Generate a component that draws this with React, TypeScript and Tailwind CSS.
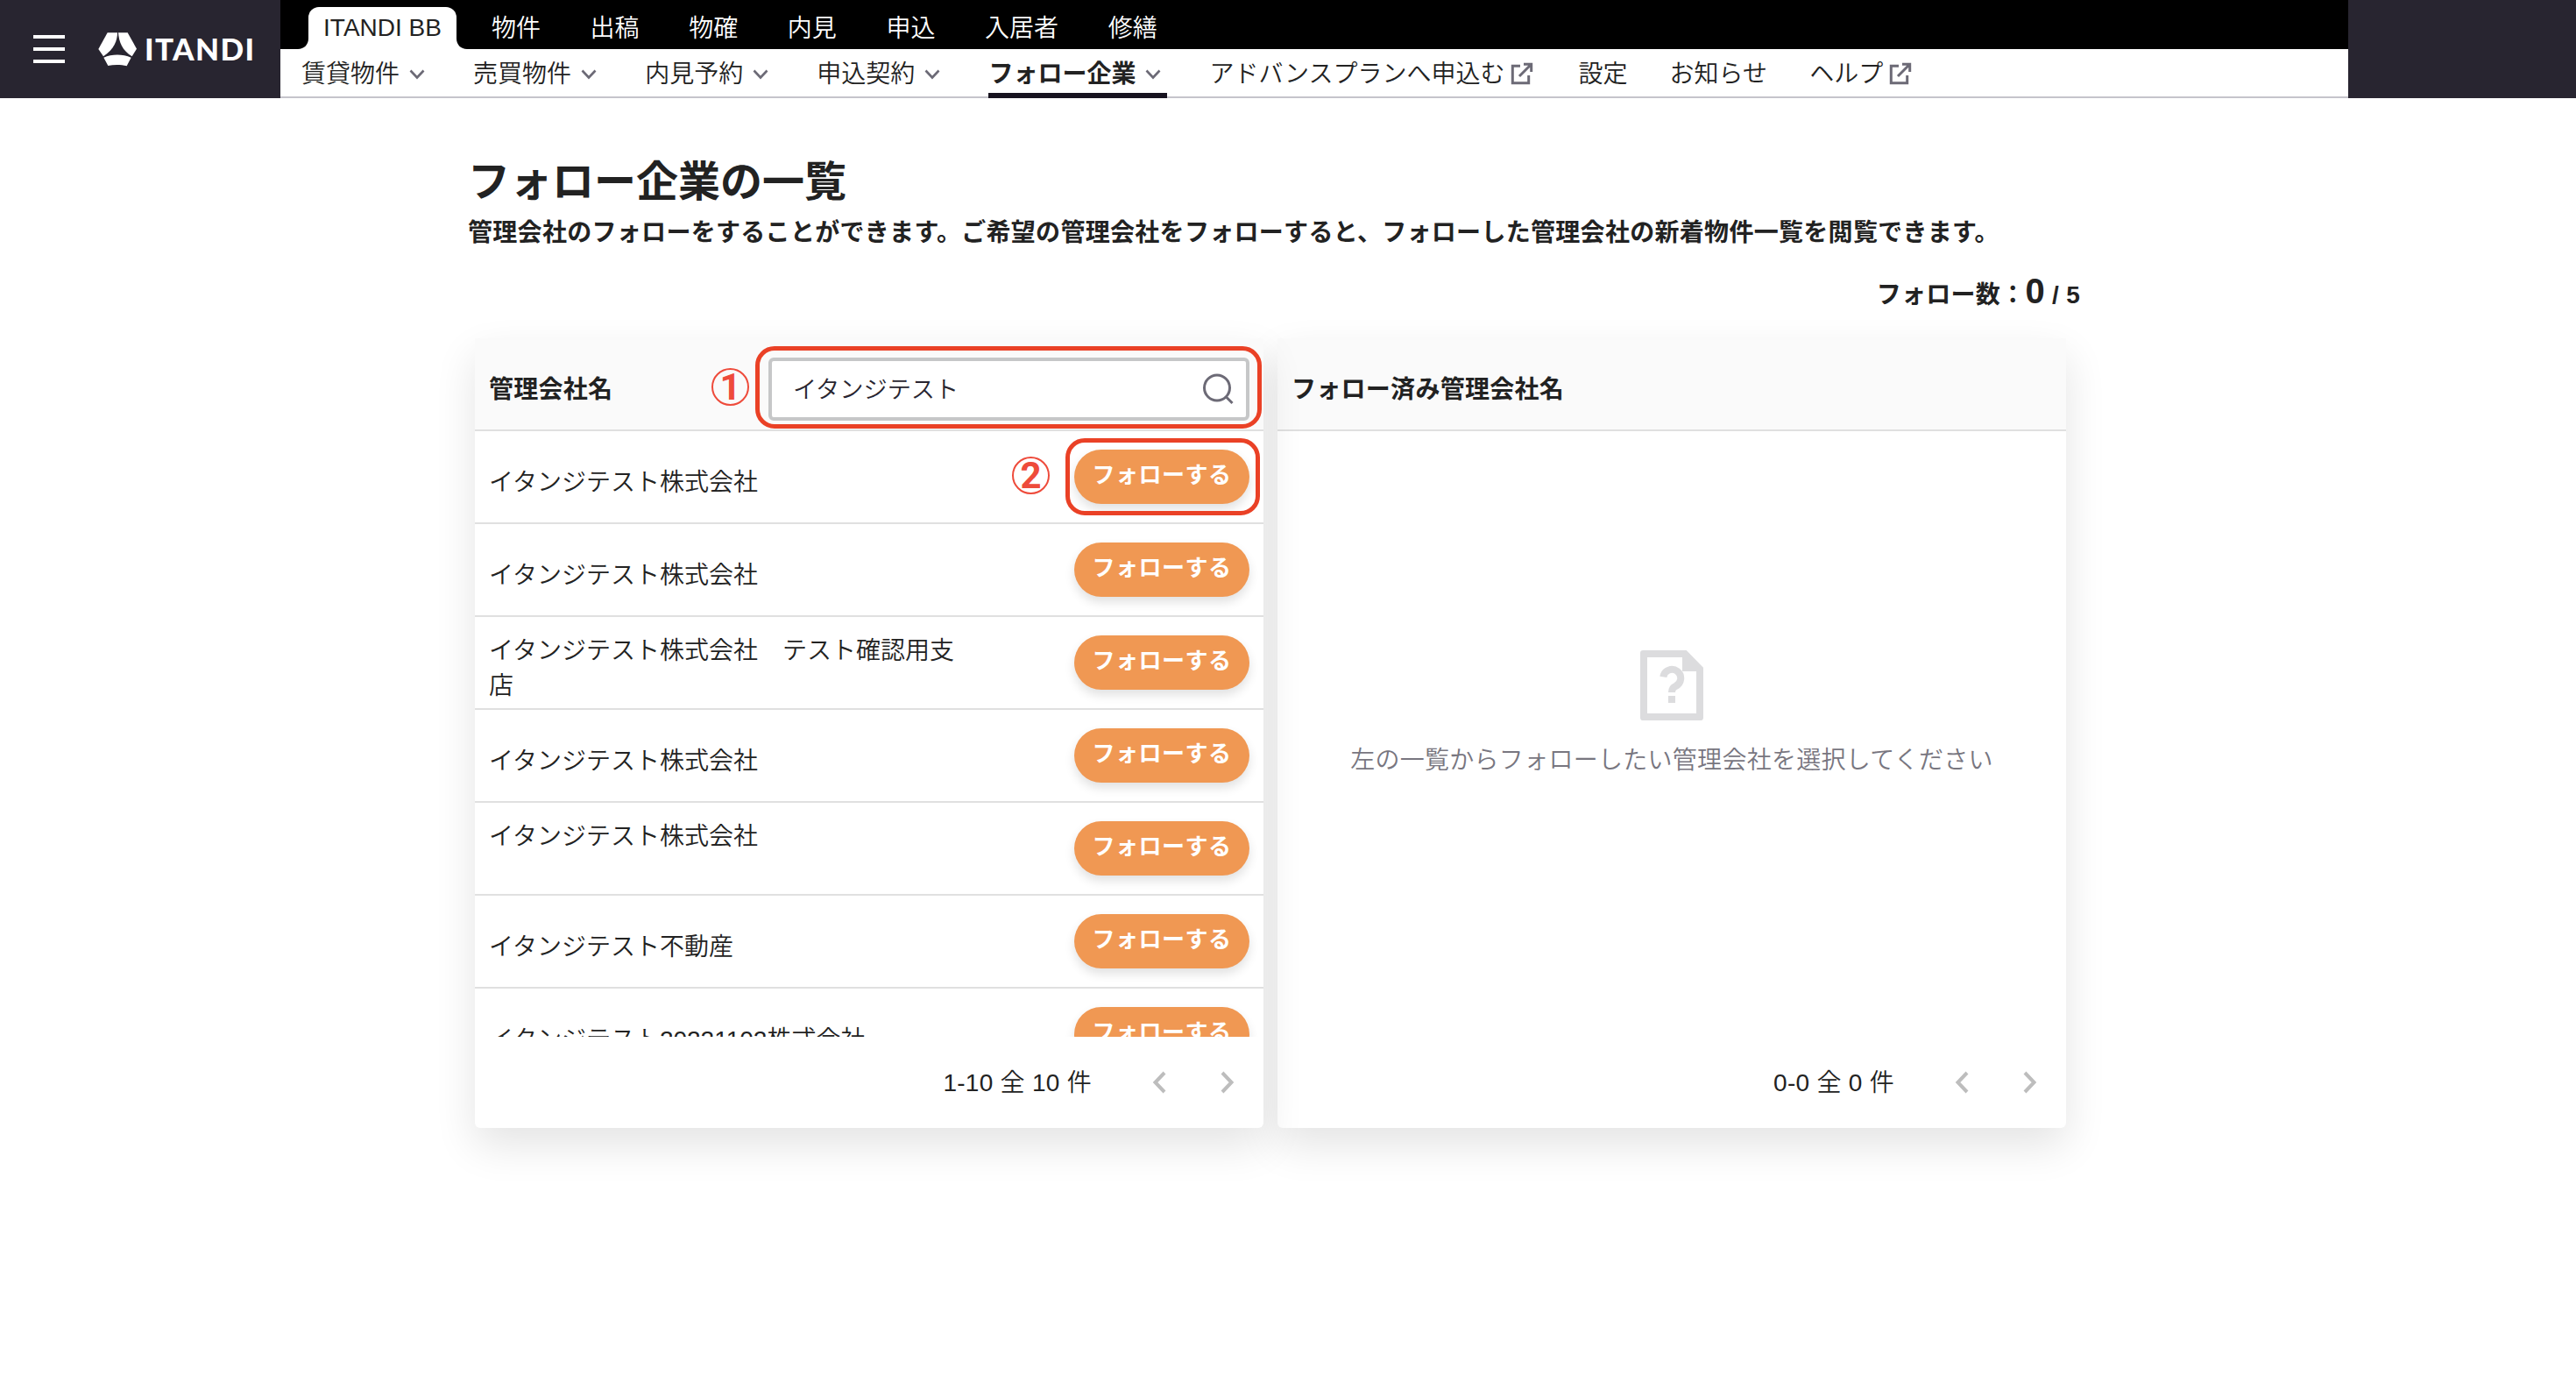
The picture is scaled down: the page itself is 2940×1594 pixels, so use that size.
import React from "react";

const topTabs = ["物件", "出稿", "物確", "内見", "申込", "入居者", "修繕"];

type SubItem = { label: string; icon?: "chevron" | "external"; active?: boolean };

const subItems: SubItem[] = [
  { label: "賃貸物件", icon: "chevron" },
  { label: "売買物件", icon: "chevron" },
  { label: "内見予約", icon: "chevron" },
  { label: "申込契約", icon: "chevron" },
  { label: "フォロー企業", icon: "chevron", active: true },
  { label: "アドバンスプランへ申込む", icon: "external" },
  { label: "設定" },
  { label: "お知らせ" },
  { label: "ヘルプ", icon: "external" },
];

const companies: string[][] = [
  ["イタンジテスト株式会社"],
  ["イタンジテスト株式会社"],
  ["イタンジテスト株式会社　テスト確認用支", "店"],
  ["イタンジテスト株式会社"],
  ["イタンジテスト株式会社", "\u00a0"],
  ["イタンジテスト不動産"],
  ["イタンジテスト20221102株式会社"],
];

function Chevron() {
  return (
    <svg className="ml-[11px] h-3 w-[18px]" viewBox="0 0 18 12" fill="none" stroke="#6c6a76" strokeWidth="2.6">
      <path d="M1.5 1.5 9 9.5l7.5-8" />
    </svg>
  );
}

function External() {
  return (
    <svg className="-mt-0.5 ml-[7px] h-[26px] w-[26px]" viewBox="0 0 26 26" fill="none" stroke="#6c6a76" strokeWidth="3">
      <path d="M11 4.300H2.300v19.400h18.400V15" />
      <path d="M15 2.300h8.700V11M23.200 2.800 10 16" />
    </svg>
  );
}

function Logo() {
  return (
    <div className="ml-[38px] flex items-center">
      <svg className="h-[39px] w-11" viewBox="36 38 132 117" fill="#fff">
        <path d="M68 39h34c0 24-10 57-48 81L37 95z" />
        <path d="M105 39h32l31 55-16 26C119 101 107 70 105 39z" />
        <path d="M55 124c28-13 65-13 94 0l-15 29c-20-5-44-5-64-1z" />
      </svg>
      <svg className="ml-[9px] h-[42px] w-[130px] overflow-visible" viewBox="0 0 130 42">
        <text
          x="0"
          y="34"
          textLength="125"
          lengthAdjust="spacing"
          fill="#fff"
          className="font-['Lato'] text-[35px] font-black"
        >
          ITANDI
        </text>
      </svg>
    </div>
  );
}

function Header() {
  return (
    <header className="flex h-28 bg-[#282530]">
      <div className="flex w-80 shrink-0 items-center pl-[38px]">
        <div className="flex flex-col gap-2.5">
          <div className="h-1 w-9 bg-white" />
          <div className="h-1 w-9 bg-white" />
          <div className="h-1 w-9 bg-white" />
        </div>
        <Logo />
      </div>
      <div className="flex w-[2360px] flex-col">
        <div className="flex h-14 bg-black pl-5 text-white">
          <svg className="mt-11 h-3 w-3" viewBox="0 0 12 12">
            <path d="M12 0v12H0C7 12 12 7 12 0z" fill="#fff" />
          </svg>
          <div className="mt-2 flex h-12 w-[169px] items-center justify-center rounded-t-xl bg-white text-[#222]">
            <span>ITANDI BB</span>
          </div>
          <svg className="mt-11 h-3 w-3" viewBox="0 0 12 12">
            <path d="M0 0v12h12C5 12 0 7 0 0z" fill="#fff" />
          </svg>
          <nav className="ml-7 flex items-center gap-[56.6px] pt-2.5">
            {topTabs.map((t) => (
              <span key={t}>{t}</span>
            ))}
          </nav>
        </div>
        <nav className="flex h-14 gap-[48.1px] border-b-2 border-[#c5c4cb] bg-white pl-6 text-[#222]">
          {subItems.map((s) => (
            <div
              key={s.label}
              className={
                s.active
                  ? "flex h-14 items-center border-b-[6px] border-[#17131f] pt-2 font-bold"
                  : "flex h-14 items-center pt-0.5"
              }
            >
              <span>{s.label}</span>
              {s.icon && (
                <span className="flex w-9">{s.icon === "chevron" ? <Chevron /> : <External />}</span>
              )}
            </div>
          ))}
        </nav>
      </div>
    </header>
  );
}

function Callout({ n, className }: { n: string; className: string }) {
  return (
    <div
      className={
        "absolute flex h-[43px] w-[43px] items-center justify-center rounded-full border-2 border-[#ee4b3b] font-['Roboto'] text-[42px] font-bold leading-none text-[#ee4b3b] " +
        className
      }
    >
      {n}
    </div>
  );
}

function Pager({ label }: { label: string }) {
  return (
    <div className="flex h-[104px] items-center justify-end pr-[33px]">
      <span className="pt-0.5 tracking-[0.28px]">{label}</span>
      <svg className="ml-[69px] mr-px h-[26px] w-4" viewBox="0 0 16 26" fill="none" stroke="#bdbdbd" strokeWidth="4">
        <path d="M14 2 3.5 13 14 24" />
      </svg>
      <svg className="ml-[61px] h-[26px] w-4" viewBox="0 0 16 26" fill="none" stroke="#bdbdbd" strokeWidth="4">
        <path d="M2 2l10.500 11L2 24" />
      </svg>
    </div>
  );
}

function CompanyCard() {
  return (
    <section className="relative h-[901px] w-[900px] rounded-md bg-white shadow-[0_20px_48px_rgba(0,0,0,0.11)]">
      <div className="flex h-[106px] items-center justify-between border-b-2 border-[#e0e0e0] bg-[#fafafa] px-4 pt-3">
        <h2 className="pt-0.5 font-bold tracking-[0.28px]">管理会社名</h2>
        <div className="flex h-[72px] w-[549px] items-center justify-between rounded-md border-4 border-[#c6c7c8] bg-white pl-6 pr-[14px] text-[#282530]">
          <span className="pt-0.5 text-[27.2px]">イタンジテスト</span>
          <svg className="h-9 w-9" viewBox="0 0 36 36" fill="none" stroke="#6c6a76" strokeWidth="3">
            <circle cx="17" cy="16.500" r="14.500" />
            <path d="M27.500 27l7 7" />
          </svg>
        </div>
      </div>
      <div className="h-[691px] overflow-hidden">
        {companies.map((lines, i) => (
          <div
            key={i}
            className="flex h-[106px] items-center justify-between border-b-2 border-[#e0e0e0] px-4"
          >
            <div className="pt-3.5 leading-10">
              {lines.map((l, j) => (
                <div key={j}>{l}</div>
              ))}
            </div>
            <button className="flex h-[62px] w-[200px] items-center justify-center rounded-full bg-[#f09853] pb-1 text-[26px] font-bold leading-none tracking-[0.52px] text-white shadow-[0_6px_12px_rgba(0,0,0,0.12)]">
              フォローする
            </button>
          </div>
        ))}
      </div>
      <Pager label="1-10 全 10 件" />

      <div className="absolute left-80 top-[9px] h-[94px] w-[578px] rounded-[22px] border-[5px] border-[#ea4126]" />
      <Callout n="1" className="left-[270px] top-[34px]" />
      <div className="absolute left-[674px] top-[114px] h-[88px] w-[222px] rounded-[22px] border-[5px] border-[#ea4126]" />
      <Callout n="2" className="left-[613px] top-[135px]" />
    </section>
  );
}

function FollowedCard() {
  return (
    <section className="flex h-[901px] w-[900px] flex-col rounded-md bg-white shadow-[0_20px_48px_rgba(0,0,0,0.11)]">
      <div className="flex h-[106px] items-center border-b-2 border-[#e0e0e0] bg-[#fafafa] px-4 pt-3.5">
        <h2 className="font-bold tracking-[0.28px]">フォロー済み管理会社名</h2>
      </div>
      <div className="flex h-[691px] flex-col items-center pt-[250px]">
        <svg className="h-20 w-[72px]" viewBox="36 36 216 240">
          <path
            fillRule="evenodd"
            fill="#dcdcde"
            d="M46 36h148l58 59v171a10 10 0 0 1-10 10H46a10 10 0 0 1-10-10V46a10 10 0 0 1 10-10zM60 60v192h168V108h-48V60z"
          />
          <path d="M115 127a30 30 0 1 1 42 32q-13 5-13 21" fill="none" stroke="#dcdcde" strokeWidth="24" />
          <path d="M132 192h24v24h-24z" fill="#dcdcde" />
        </svg>
        <p className="mt-[25px] tracking-[0.28px] text-[#78767f]">左の一覧からフォローしたい管理会社を選択してください</p>
      </div>
      <Pager label="0-0 全 0 件" />
    </section>
  );
}

export default function App() {
  return (
    <div className="h-[1594px] w-[2940px] overflow-hidden bg-white font-['Liberation_Sans','Noto_Sans_CJK_JP',sans-serif] text-[28px] font-[350] leading-[42px] text-[#222]">
      <Header />
      <main className="ml-[534px] w-[1840px] pt-[62px]">
        <h1 className="text-5xl font-bold leading-[68px]">フォロー企業の一覧</h1>
        <p className="mt-[3px] whitespace-nowrap font-bold tracking-[0.3px]">
          管理会社のフォローをすることができます。ご希望の管理会社をフォローすると、フォローした管理会社の新着物件一覧を閲覧できます。
        </p>
        <p className="mt-[21px] flex h-[48px] items-baseline justify-end whitespace-pre font-bold tracking-[0.28px]">
          フォロー数：<span className="text-[40px] leading-[48px]">0</span> / 5
        </p>
        <div className="ml-2 mt-[30px] flex gap-4">
          <CompanyCard />
          <FollowedCard />
        </div>
      </main>
    </div>
  );
}
